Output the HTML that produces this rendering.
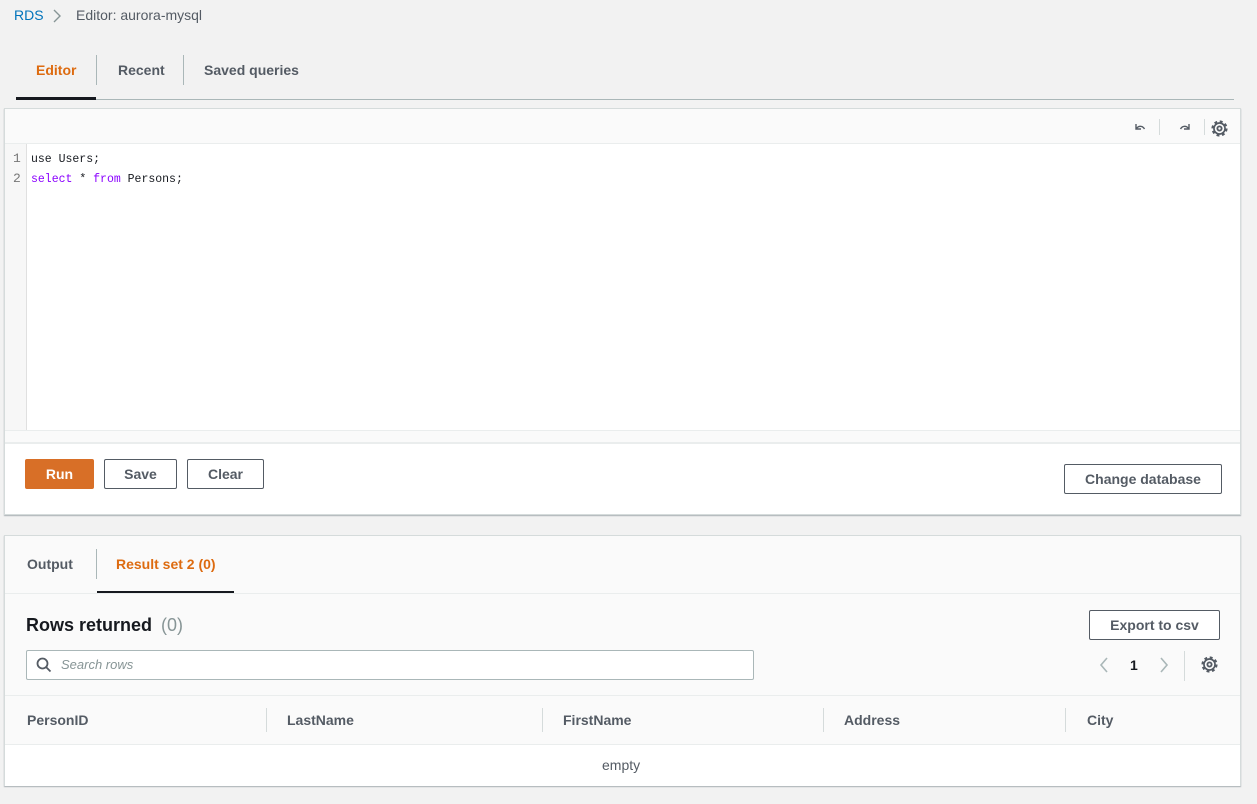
<!DOCTYPE html>
<html><head><style>
*{box-sizing:border-box;margin:0;padding:0}
body{width:1257px;height:804px;background:#f2f2f2;font-family:"Liberation Sans",Arial,sans-serif;position:relative;overflow:hidden;color:#16191f}
.a{position:absolute}
.b{font-weight:bold}
.btn{position:absolute;border:1px solid #545b64;border-radius:2px;background:#fff;font-weight:bold;font-size:14px;color:#545b64;text-align:center}
.mono{font-family:"Liberation Mono",monospace;font-size:11.5px}
.th{position:absolute;top:712px;font-size:14px;font-weight:bold;color:#545b64}
.sep{position:absolute;width:1px;background:#d5dbdb}
</style></head><body>
<div class="a" style="left:14px;top:7px;font-size:14px;color:#0073bb">RDS</div>
<svg class="a" style="left:52px;top:8px" width="10" height="16"><path d="M2 2l6 6-6 6" stroke="#879596" stroke-width="1.4" fill="none"/></svg>
<div class="a" style="left:76px;top:7px;font-size:14px;color:#545b64">Editor: aurora-mysql</div>

<div class="a b" style="left:36px;top:62px;font-size:14px;color:#dd6b10">Editor</div>
<div class="sep" style="left:96px;top:55px;height:30px;background:#aab7b8"></div>
<div class="a b" style="left:118px;top:62px;font-size:14px;color:#545b64">Recent</div>
<div class="sep" style="left:183px;top:55px;height:30px;background:#aab7b8"></div>
<div class="a b" style="left:204px;top:62px;font-size:14px;color:#545b64">Saved queries</div>
<div class="a" style="left:16px;top:99px;width:1218px;height:1px;background:#aab7b8"></div>
<div class="a" style="left:16px;top:97px;width:80px;height:3px;background:#16191f"></div>

<div class="a" style="left:4px;top:108px;width:1237px;height:407px;background:#fff;border:1px solid #d5dbdb;box-shadow:0 1px 1px rgba(0,28,36,.3)">
 <div class="a" style="left:0;top:0;width:1235px;height:35px;background:#fafafa;border-bottom:1px solid #eaeded"></div>
 <svg class="a" style="left:1127px;top:12px" width="16" height="14"><path d="M4 3v5h5M4.5 7.5C6.5 4.5 10.5 4.5 12.5 8" stroke="#545b64" stroke-width="1.4" fill="none"/></svg>
 <div class="sep" style="left:1154px;top:10px;height:16px"></div>
 <svg class="a" style="left:1172px;top:12px" width="16" height="14"><path d="M12 3v5H7M11.5 7.5C9.5 4.5 5.5 4.5 3.5 8" stroke="#545b64" stroke-width="1.4" fill="none"/></svg>
 <div class="sep" style="left:1199px;top:10px;height:16px"></div>
 <svg class="a" style="left:1206px;top:11px" width="17" height="17" viewBox="0 0 16 16"><circle cx="8" cy="8" r="6.3" stroke="#545b64" stroke-width="2.6" fill="none" stroke-dasharray="2.6 2.35"/><circle cx="8" cy="8" r="5.2" stroke="#545b64" stroke-width="1.6" fill="none"/><circle cx="8" cy="8" r="2" stroke="#545b64" stroke-width="1.7" fill="none"/></svg>
 <div class="a" style="left:0;top:35px;width:22px;height:286px;background:#f7f7f7;border-right:1px solid #e0e0e0"></div>
 <div class="a mono" style="left:8px;top:40px;font-size:13px;color:#777;line-height:20px">1<br>2</div>
 <div class="a mono" style="left:26px;top:41px;line-height:20px">use Users;<br><span style="color:#8a00ff">select</span> * <span style="color:#8a00ff">from</span> Persons;</div>
 <div class="a" style="left:0;top:321px;width:1235px;height:14px;background:#fafafa;border-top:1px solid #eaeded;border-bottom:2px solid #eaeded"></div>
</div>
<div class="btn" style="left:25px;top:459px;width:69px;height:30px;line-height:28px;background:#d86f27;border-color:#d86f27;color:#fff">Run</div>
<div class="btn" style="left:104px;top:459px;width:73px;height:30px;line-height:28px">Save</div>
<div class="btn" style="left:187px;top:459px;width:77px;height:30px;line-height:28px">Clear</div>
<div class="btn" style="left:1064px;top:464px;width:158px;height:30px;line-height:28px">Change database</div>

<div class="a" style="left:4px;top:535px;width:1237px;height:251px;background:#fafafa;border:1px solid #d5dbdb;box-shadow:0 1px 1px rgba(0,28,36,.3)">
 <div class="a" style="left:0;top:57px;width:1235px;height:1px;background:#eaeded"></div>
 <div class="a" style="left:0;top:159px;width:1235px;height:1px;background:#eaeded"></div>
 <div class="a" style="left:0;top:208px;width:1235px;height:42px;background:#fff;border-top:1px solid #eaeded"></div>
</div>
<div class="a b" style="left:27px;top:556px;font-size:14px;color:#545b64">Output</div>
<div class="sep" style="left:96px;top:549px;height:30px;background:#aab7b8"></div>
<div class="a b" style="left:116px;top:556px;font-size:14px;color:#dd6b10">Result set 2 (0)</div>
<div class="a" style="left:97px;top:591px;width:137px;height:2px;background:#16191f"></div>

<div class="a b" style="left:26px;top:615px;font-size:18px;color:#16191f">Rows returned <span style="font-weight:normal;color:#879596;margin-left:4px">(0)</span></div>
<div class="btn" style="left:1089px;top:610px;width:131px;height:30px;line-height:28px">Export to csv</div>
<div class="a" style="left:26px;top:650px;width:728px;height:30px;background:#fff;border:1px solid #aab7b8;border-radius:2px"></div>
<svg class="a" style="left:36px;top:657px" width="16" height="16"><circle cx="6.5" cy="6.5" r="5" stroke="#545b64" stroke-width="1.8" fill="none"/><path d="M10 10l4.5 4.5" stroke="#545b64" stroke-width="1.8"/></svg>
<div class="a" style="left:61px;top:657px;font-size:13px;font-style:italic;color:#879596">Search rows</div>
<svg class="a" style="left:1098px;top:656px" width="12" height="18"><path d="M9 2L3 9l6 7" stroke="#aab7b8" stroke-width="1.6" fill="none"/></svg>
<div class="a b" style="left:1130px;top:657px;font-size:14px">1</div>
<svg class="a" style="left:1158px;top:656px" width="12" height="18"><path d="M3 2l6 7-6 7" stroke="#aab7b8" stroke-width="1.6" fill="none"/></svg>
<div class="sep" style="left:1184px;top:651px;height:30px"></div>
<svg class="a" style="left:1201px;top:656px" width="17" height="17" viewBox="0 0 16 16"><circle cx="8" cy="8" r="6.3" stroke="#545b64" stroke-width="2.6" fill="none" stroke-dasharray="2.6 2.35"/><circle cx="8" cy="8" r="5.2" stroke="#545b64" stroke-width="1.6" fill="none"/><circle cx="8" cy="8" r="2" stroke="#545b64" stroke-width="1.7" fill="none"/></svg>

<div class="th" style="left:27px">PersonID</div>
<div class="sep" style="left:266px;top:708px;height:24px"></div>
<div class="th" style="left:287px">LastName</div>
<div class="sep" style="left:542px;top:708px;height:24px"></div>
<div class="th" style="left:563px">FirstName</div>
<div class="sep" style="left:823px;top:708px;height:24px"></div>
<div class="th" style="left:844px">Address</div>
<div class="sep" style="left:1065px;top:708px;height:24px"></div>
<div class="th" style="left:1087px">City</div>
<div class="a" style="left:602px;top:757px;font-size:14px;color:#545b64">empty</div>
</body></html>
